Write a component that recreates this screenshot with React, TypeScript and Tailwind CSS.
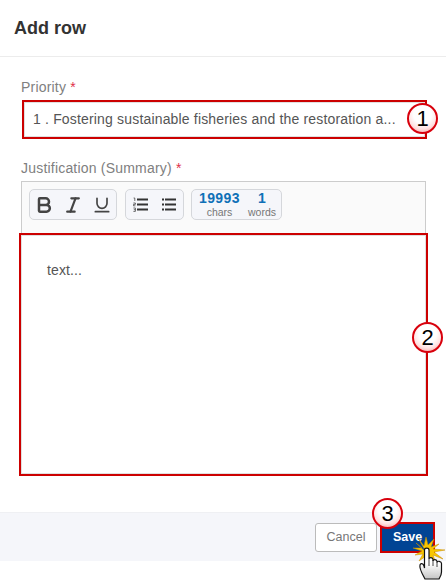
import React from "react";
import { Bold, Italic, Underline } from "lucide-react";

const Badge = ({ n, className }: { n: string; className: string }) => (
  <div
    className={`absolute flex h-[31px] w-[31px] items-center justify-center rounded-full border-[2.5px] border-[#d8000c] bg-[radial-gradient(circle_at_50%_35%,#ffffff_40%,#ffe3e3_65%,#f08a8a_100%)] text-[22px] leading-none text-black ${className}`}
  >
    {n}
  </div>
);

const ToolGroup = ({ children, className }: { children: React.ReactNode; className: string }) => (
  <div className={`flex h-[31px] items-center rounded-[5px] border border-[#d5d7db] bg-[#f5f6fa] ${className}`}>{children}</div>
);

const OrderedIcon = () => (
  <svg width="15" height="15" viewBox="0 0 15 15" fill="none" stroke="#333">
    <path d="M4 2.5h11M4 7.5h11M4 12.5h11" strokeWidth="1.8" />
    <path d="M0.6 1h1.2v3M0.4 6h2v1.4h-2v1.4h2M0.4 11h2v3.4h-2M0.8 12.7h1.6" strokeWidth="0.7" />
  </svg>
);

const BulletIcon = () => (
  <svg width="14" height="15" viewBox="0 0 14 15" fill="none" stroke="#333" strokeWidth="1.8">
    <path d="M3 2.5h11M3 7.5h11M3 12.5h11" />
    <path d="M0 2.5h2M0 7.5h2M0 12.5h2" />
  </svg>
);

const Hand = () => (
  <svg className="absolute left-[406px] top-[530px]" width="40" height="51" viewBox="0 0 40 51">
    <defs>
      <linearGradient id="handFill" x1="0" y1="0" x2="0" y2="1">
        <stop offset="0.5" stopColor="#ffffff" />
        <stop offset="1" stopColor="#c4c4c4" />
      </linearGradient>
    </defs>
    <path
      d="M20 22L12 8l6 8 2-9 2 8 6-6-3 8 8-3-6 5 12 1-11 2 9 7-10-4 3 8-6-6-3 5-1-6-7 5 4-7-8 1 7-4-9-3 9 0-6-5z"
      fill="#f7c600"
      stroke="#c98a00"
      strokeWidth="0.5"
    />
    <path
      d="M19 49C17 45 13 39 14 35C14.5 33 17 33 18 36L18.5 38L18.5 20C18.5 17.5 23 17.5 23 20L23 29C23 27 27 27 27 29.5L27 31C27 29 31 29 31 31.5L31 32.5C31 30.5 35.5 31 35.5 33.5L35.5 42C35.5 45 34 47 33 49Z"
      fill="url(#handFill)"
      stroke="#111"
      strokeWidth="1.2"
    />
    <path d="M23 29v7M27 30v6M31 32v5" stroke="#111" strokeWidth="0.8" />
  </svg>
);

export default function App() {
  return (
    <div className="relative h-[581px] w-[446px] overflow-hidden bg-white font-['Liberation_Sans',Arial,sans-serif]">
      <div className="flex h-[57px] items-center border-b border-[#ececec] pl-[14px] text-[18px] font-bold text-[#333]">
        Add row
      </div>

      <div className="px-[21px]">
        <div className="mt-[22px] text-[14px] leading-4 tracking-[0.2px] text-[#808080]">
          Priority <span className="text-[#e0304a]">*</span>
        </div>
        <div className="mt-[5px] ml-px flex h-[39px] w-[405px] items-center border-2 border-[#cc0000] pl-[9px] text-[14px] tracking-[0.17px] text-[#555] shadow-[inset_0_0_0_1px_#e0e0e0]">
          1 . Fostering sustainable fisheries and the restoration a...
        </div>

        <div className="mt-[21px] text-[14px] leading-4 tracking-[0.2px] text-[#808080]">
          Justification (Summary) <span className="text-[#e0304a]">*</span>
        </div>
        <div className="mt-[5px] flex h-[52px] w-[405px] items-start border border-b-0 border-[#ccc] bg-[#fafafa] pl-[7px] pt-[7px]">
          <ToolGroup className="w-[88px] text-[#444]">
            <span className="flex w-[29px] justify-center"><Bold size={20} strokeWidth={3} /></span>
            <span className="flex w-[29px] justify-center"><Italic size={20} strokeWidth={2.6} /></span>
            <span className="flex w-[29px] justify-center"><Underline size={20} strokeWidth={2} /></span>
          </ToolGroup>
          <ToolGroup className="ml-2 w-[59px] justify-between pl-[7px] pr-[7px]">
            <OrderedIcon />
            <BulletIcon />
          </ToolGroup>
          <ToolGroup className="ml-[7px] w-[91px] justify-between pl-[7px] pr-[5px]">
            <div className="flex flex-col items-center leading-none">
              <span className="text-[14px] font-bold tracking-[0.4px] text-[#0f70b7]">19993</span>
              <span className="mt-[2px] text-[10.5px] text-[#777]">chars</span>
            </div>
            <div className="flex flex-col items-center leading-none">
              <span className="text-[14px] font-bold text-[#0f70b7]">1</span>
              <span className="mt-[2px] text-[10.5px] text-[#777]">words</span>
            </div>
          </ToolGroup>
        </div>
        <div className="-ml-[2px] h-[243px] w-[409px] border-2 border-[#cc0000] pl-[26px] pt-[25px] text-[14px] tracking-[0.1px] text-[#555] shadow-[inset_0_0_0_1px_#e0e0e0]">
          text...
        </div>
      </div>

      <div className="mt-[36px] flex h-[49px] items-start justify-end gap-[3px] border-t border-[#eff0f3] bg-[#f5f6fa] pr-[11px] pt-[9px]">
        <button className="mt-px h-[29px] w-[62px] rounded-[3px] border border-[#bbb] bg-white text-[12.5px] text-[#777]">
          Cancel
        </button>
        <button className="h-[31px] w-[55px] border-2 border-[#cc0000] bg-[#004494] text-[12.5px] font-bold text-white">
          Save
        </button>
      </div>

      <Badge n="1" className="left-[407px] top-[103px]" />
      <Badge n="2" className="left-[412px] top-[322px]" />
      <Badge n="3" className="left-[372px] top-[498px]" />
      <Hand />
    </div>
  );
}
